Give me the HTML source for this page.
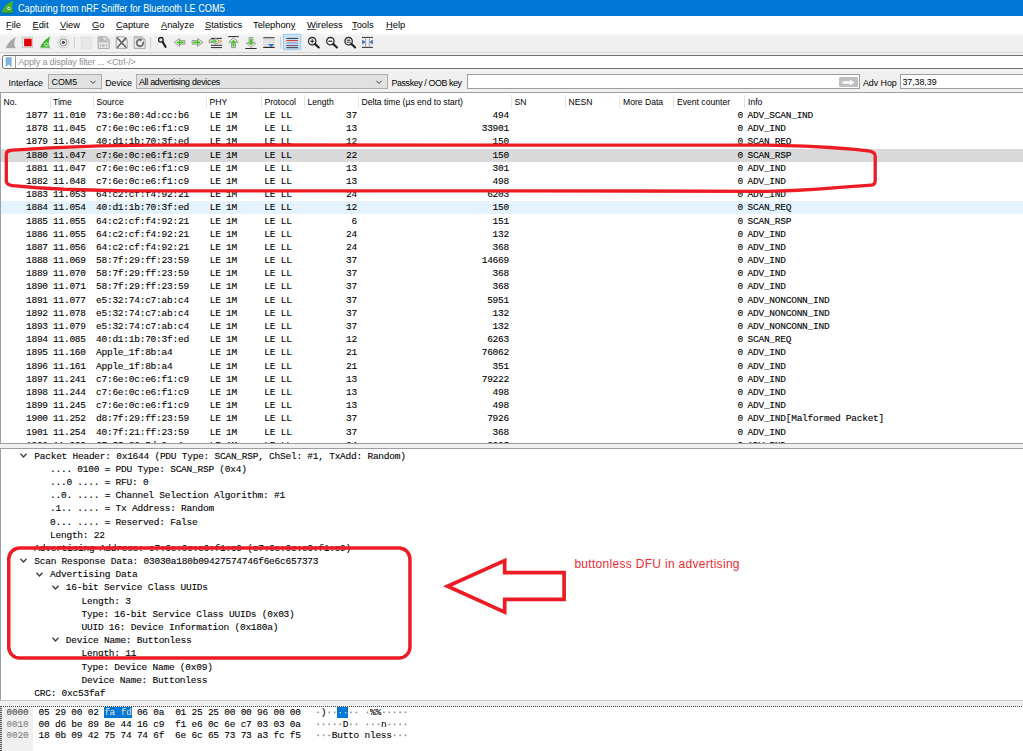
<!DOCTYPE html><html><head><meta charset="utf-8"><title>Capturing from nRF Sniffer for Bluetooth LE COM5</title><style>
*{box-sizing:border-box;margin:0;padding:0}
html,body{width:1023px;height:751px;overflow:hidden}
body{position:relative;background:#f0f0f0;font-family:"Liberation Sans",sans-serif;font-size:8.6px;color:#000}
.a{position:absolute;white-space:pre}
.m{font-family:"Liberation Mono",monospace;font-size:9.5px;letter-spacing:-0.240px;color:#000;-webkit-text-stroke:.1px #000}
#title{left:0;top:0;width:1023px;height:15.7px;background:#0078d7}
#title .t{left:18px;top:2.5px;color:#fff;font-size:10.2px;line-height:12px;transform-origin:0 50%;transform:scaleX(.9)}
#menu{left:0;top:16px;width:1023px;height:17px;background:#fff}
#menu .a{top:2.6px;font-size:9.3px;line-height:12px}
#menu u{text-decoration:underline;text-underline-offset:1px;text-decoration-thickness:.8px;text-decoration-color:#555}
#tb{left:0;top:33px;width:1023px;height:19px;background:linear-gradient(#fafafa,#f0f0f0 4px,#f0f0f0)}
#tbl{left:0;top:51.5px;width:1023px;height:1px;background:#d4d4d4}
#filt{left:1.6px;top:55px;width:1030px;height:14px;background:#fff;border:1px solid #727272;border-radius:2.5px}
#ifbar{left:0;top:70px;width:1023px;height:23px;background:#f0f0f0;border-top:1px solid #fbfbfb}
.combo{background:#e1e1e1;border:1px solid #adadad;height:14.5px;top:74px}
.inp{background:#fff;border:1px solid #9e9e9e;height:14.5px;top:74px}
.lbl{top:77.5px;line-height:11px;font-size:8.9px}
#plist{left:0;top:92px;width:1030px;height:352px;background:#fff;border:1px solid #9a9fa6;overflow:hidden}
#pdet{left:0;top:448px;width:1030px;height:253px;background:#fff;border:1px solid #9a9fa6;border-bottom-color:#c8c8c8;overflow:hidden}
#phex{left:0;top:706px;width:1030px;height:60px;background:#fff;border:1px dotted #444;border-left:2px solid transparent;background-clip:padding-box;overflow:hidden}
.hd{top:96.7px;line-height:11px;font-size:8.6px}
.r{height:13px;line-height:14px}
.chev{width:7px;height:5px}
</style></head><body>
<div id="title" class="a"><svg class="a" style="left:0;top:0" width="16" height="16" viewBox="0 0 16 16"><path d="M1.8 12.6 C2.6 8 6.2 3 13.4 .8 C12.3 4.6 11.7 9 13 12.6 Z" fill="#43b02a"/><path d="M1.5 13 L13.4 13" stroke="#2a7d1c" stroke-width=".8"/><circle cx="8.9" cy="8.4" r="1.7" fill="#d7f0cf"/><circle cx="9.1" cy="8.5" r=".8" fill="#3a8a2a"/></svg><div class="a t">Capturing from nRF Sniffer for Bluetooth LE COM5</div></div>
<div id="menu" class="a"><div class="a" style="left:6px"><u>F</u>ile</div><div class="a" style="left:32.5px"><u>E</u>dit</div><div class="a" style="left:60px"><u>V</u>iew</div><div class="a" style="left:92px"><u>G</u>o</div><div class="a" style="left:116px"><u>C</u>apture</div><div class="a" style="left:161px"><u>A</u>nalyze</div><div class="a" style="left:205px"><u>S</u>tatistics</div><div class="a" style="left:253px">Telephon<u>y</u></div><div class="a" style="left:307px"><u>W</u>ireless</div><div class="a" style="left:352px"><u>T</u>ools</div><div class="a" style="left:386px"><u>H</u>elp</div></div>
<div id="tb" class="a"></div><div id="tbl" class="a"></div>
<svg class="a" style="left:0;top:33px" width="400" height="19" viewBox="0 33 400 19"><path d="M5.80 48.10 C7.20 44.20 10.80 39.40 16.00 37.00 C14.50 40.30 13.20 44.60 15.80 48.10 Z" fill="#a9a9a9"/><path d="M5 48.5 L17 48.5" stroke="#e2e2e2" stroke-width="1"/><rect x="22.3" y="37.2" width="10.2" height="10.2" fill="#f4f4f4" stroke="#c4c4c4" stroke-width=".9"/><rect x="24.1" y="38.7" width="7.6" height="7.6" fill="#dc0000"/><path d="M40.20 47.70 C41.60 43.80 45.20 39.00 50.40 36.60 C48.90 39.90 47.60 44.20 50.20 47.70 Z" fill="#3fb32f"/><circle cx="46.3" cy="44.6" r="1.7" fill="none" stroke="#e8f8e2" stroke-width=".9"/><path d="M39.5 48.4 L51.5 48.4" stroke="#cfe6ca" stroke-width="1"/><circle cx="63.4" cy="42.4" r="5.5" fill="#f7f7f7" stroke="#bdbdbd" stroke-width=".8"/><circle cx="63.4" cy="42.4" r="3.5" fill="none" stroke="#8a8a8a" stroke-width="1"/><circle cx="63.4" cy="42.4" r="1.7" fill="#555"/><path d="M74.4 37 L74.4 48.5" stroke="#cdcdcd" stroke-width="1"/><rect x="81.3" y="37" width="10" height="11.4" fill="#e7e7e7" stroke="#dedede" stroke-width=".8"/><path d="M90.6 44 L91.6 44 L91.6 48 L90.6 48Z" fill="#dcdcdc"/><path d="M98.2 36.8 L106.2 36.8 L109.2 39.8 L109.2 48.4 L98.2 48.4 Z" fill="#ececec" stroke="#a6a6a6" stroke-width="1"/><path d="M106.2 36.8 L106.2 39.8 L109.2 39.8" fill="none" stroke="#a6a6a6" stroke-width=".8"/><path d="M98.7 37.3 L103.5 37.3 L103.5 39.2 L108.7 41.6 L108.7 42.6 L98.7 42.6 Z" fill="#b9b9b9"/><path d="M100.3 44.2 L100.3 46.8 M102.8 44.2 L102.8 46.8 M104 44.2 L104 46.8 M106.6 44.2 L106.6 46.8" stroke="#9a9a9a" stroke-width=".9"/><path d="M116.2 36.8 L124.2 36.8 L127.2 39.8 L127.2 48.4 L116.2 48.4 Z" fill="#efefef" stroke="#a6a6a6" stroke-width="1"/><path d="M124.2 36.8 L124.2 39.8 L127.2 39.8" fill="none" stroke="#a6a6a6" stroke-width=".8"/><path d="M117 37.6 L126.4 47.8 M126.4 37.6 L117 47.8" stroke="#666" stroke-width="1.6"/><path d="M134.2 36.8 L142.2 36.8 L145.2 39.8 L145.2 48.4 L134.2 48.4 Z" fill="#efefef" stroke="#a6a6a6" stroke-width="1"/><path d="M142.2 36.8 L142.2 39.8 L145.2 39.8" fill="none" stroke="#a6a6a6" stroke-width=".8"/><path d="M134.7 37.3 L139 37.3 L139 38.6 L134.7 38.6Z" fill="#b5b5b5"/><path d="M143 41.6 A3.3 3.3 0 1 1 140 39.6" fill="none" stroke="#707070" stroke-width="1.9"/><path d="M139.6 37.6 L142.6 39.8 L139.6 41.8 Z" fill="#707070"/><path d="M150.6 37 L150.6 48.5" stroke="#cdcdcd" stroke-width="1"/><circle cx="160.9" cy="39.8" r="2.3" fill="#e4e4e4" stroke="#222" stroke-width="1.3"/><path d="M162.9 42.2 L165.5 46.8" stroke="#1a1a1a" stroke-width="2.1" stroke-linecap="round"/><path d="M174.3 42.4 L179.70000000000002 38.5 L179.70000000000002 40.65 L184.9 40.65 L184.9 44.15 L179.70000000000002 44.15 L179.70000000000002 46.3 Z" fill="#eef3ea" stroke="#8c8c8c" stroke-width=".9" stroke-linejoin="round"/><path d="M176.40 42.4 L180.30 40.10 L180.30 41.50 L183.70 41.50 L183.70 43.30 L180.30 43.30 L180.30 44.70 Z" fill="#45c81a"/><path d="M203 42.4 L197.6 38.5 L197.6 40.65 L192.1 40.65 L192.1 44.15 L197.6 44.15 L197.6 46.3 Z" fill="#eef3ea" stroke="#8c8c8c" stroke-width=".9" stroke-linejoin="round"/><path d="M200.90 42.4 L197.00 40.10 L197.00 41.50 L193.30 41.50 L193.30 43.30 L197.00 43.30 L197.00 44.70 Z" fill="#45c81a"/><path d="M211 38.4 L222 38.4 M211 45.3 L222 45.3 M211 47.6 L222 47.6" stroke="#2a2a2a" stroke-width="1"/><path d="M216 43.2 L222 43.2" stroke="#c4c4c4" stroke-width=".8"/><path d="M219.6 41.2 L215.2 38.1 L215.2 39.7 L209.2 39.7 L209.2 42.7 L215.2 42.7 L215.2 44.300000000000004 Z" fill="#eef3ea" stroke="#8c8c8c" stroke-width=".9" stroke-linejoin="round"/><path d="M217.50 41.2 L214.60 39.70 L214.60 40.55 L210.40 40.55 L210.40 41.85 L214.60 41.85 L214.60 42.70 Z" fill="#45c81a"/><rect x="219.6" y="40.1" width="2.4" height="2.2" fill="#f6b24a"/><path d="M228.2 36.6 L238.8 36.6" stroke="#2a2a2a" stroke-width="1"/><path d="M233.5 37.6 L238.1 42.2 L235.4 42.2 L235.4 47.6 L231.6 47.6 L231.6 42.2 L228.9 42.2 Z" fill="#eef3ea" stroke="#8c8c8c" stroke-width=".9" stroke-linejoin="round"/><path d="M233.5 39.60 L236.20 42.70 L234.55 42.70 L234.55 46.40 L232.45 46.40 L232.45 42.70 L230.80 42.70 Z" fill="#45c81a"/><path d="M245.4 48.5 L256.6 48.5" stroke="#2a2a2a" stroke-width="1"/><path d="M251 47.5 L255.6 42.9 L252.9 42.9 L252.9 37.5 L249.1 37.5 L249.1 42.9 L246.4 42.9 Z" fill="#eef3ea" stroke="#8c8c8c" stroke-width=".9" stroke-linejoin="round"/><path d="M251 45.50 L253.70 42.40 L252.05 42.40 L252.05 38.70 L249.95 38.70 L249.95 42.40 L248.30 42.40 Z" fill="#45c81a"/><path d="M263.2 37.7 L274.6 37.7 M263.2 47.4 L274.6 47.4" stroke="#2a2a2a" stroke-width="1.1"/><path d="M263.2 40 L274.6 40 M263.2 42.3 L274.6 42.3 M263.2 44.6 L268 44.6" stroke="#c2c2c2" stroke-width=".8"/><path d="M267.8 44 L274.6 44 L271.2 47 Z" fill="#2f6fc6"/><path d="M280.6 37 L280.6 48.5" stroke="#cdcdcd" stroke-width="1"/><rect x="283.4" y="34.3" width="17.4" height="15.4" fill="#cce4f7" stroke="#8fc4ee" stroke-width=".9"/><path d="M286.3 38.4 L298.2 38.4" stroke="#333" stroke-width="1"/><path d="M286.3 40.6 L298.2 40.6" stroke="#e03030" stroke-width="1"/><path d="M286.3 42.9 L298.2 42.9" stroke="#93acd4" stroke-width="1.6"/><path d="M286.3 45.6 L298.2 45.6" stroke="#6a3f7a" stroke-width="1"/><path d="M286.3 47.7 L298.2 47.7" stroke="#333" stroke-width="1"/><circle cx="312.2" cy="41.2" r="3.7" fill="#fff" stroke="#2b2b2b" stroke-width="1.3"/><path d="M314.864 43.864000000000004 L318.79999999999995 47.50000000000001" stroke="#222" stroke-width="2.1" stroke-linecap="round"/><path d="M310.2 41.2 L314.2 41.2 M312.2 39.2 L312.2 43.2" stroke="#222" stroke-width="1.1"/><circle cx="330.4" cy="41.2" r="3.7" fill="#fff" stroke="#2b2b2b" stroke-width="1.3"/><path d="M333.06399999999996 43.864000000000004 L336.99999999999994 47.50000000000001" stroke="#222" stroke-width="2.1" stroke-linecap="round"/><path d="M328.4 41.2 L332.4 41.2" stroke="#222" stroke-width="1.2"/><circle cx="348.6" cy="41.2" r="3.7" fill="#fff" stroke="#2b2b2b" stroke-width="1.3"/><path d="M351.264 43.864000000000004 L355.2 47.50000000000001" stroke="#222" stroke-width="2.1" stroke-linecap="round"/><path d="M346.6 40.2 L350.6 40.2 M346.6 42.2 L350.6 42.2" stroke="#222" stroke-width="1"/><path d="M362 37.4 L372.9 37.4 M362 47.4 L372.9 47.4" stroke="#2a2a2a" stroke-width="1"/><path d="M365.6 37.4 L365.6 47.4 M369.4 37.4 L369.4 47.4" stroke="#9a9a9a" stroke-width=".9"/><path d="M362.2 39.6 L365.4 42 L362.2 44.4 Z M372.8 39.6 L369.6 42 L372.8 44.4 Z" fill="#2f6fc6"/></svg>
<div id="filt" class="a"><svg class="a" style="left:2.6px;top:1px" width="8" height="11" viewBox="0 0 8 11"><path d="M.6 .3 L6.6 .3 L6.6 10.3 L3.6 7.6 L.6 10.3 Z" fill="#7fb0e0"/></svg><div class="a" style="left:12.4px;top:0;width:1px;height:12px;background:#9a9a9a"></div><div class="a" style="left:15.6px;top:1.4px;line-height:11px;color:#909090;font-size:9.1px;letter-spacing:-.18px">Apply a display filter ... &lt;Ctrl-/&gt;</div></div>
<div id="ifbar" class="a"></div>
<div class="a lbl" style="left:8.5px">Interface</div>
<div class="a combo" style="left:48px;width:54px"><div class="a" style="left:2.5px;top:2.3px;line-height:11px;font-size:8.9px">COM5</div><svg class="a" style="left:40px;top:4.8px" width="8" height="5" viewBox="0 0 8 5"><path d="M1.4 .8 L4 3.5 L6.6 .8" fill="none" stroke="#444" stroke-width="1"/></svg></div>
<div class="a lbl" style="left:105.3px;letter-spacing:-.1px">Device</div>
<div class="a combo" style="left:136px;width:252px"><div class="a" style="left:2px;top:2.3px;line-height:11px;font-size:8.9px;letter-spacing:-.3px">All advertising devices</div><svg class="a" style="left:238px;top:4.8px" width="8" height="5" viewBox="0 0 8 5"><path d="M1.4 .8 L4 3.5 L6.6 .8" fill="none" stroke="#444" stroke-width="1"/></svg></div>
<div class="a lbl" style="left:391.5px;letter-spacing:-.4px">Passkey / OOB key</div>
<div class="a inp" style="left:467px;width:393px"><div class="a" style="right:1px;top:1.5px;width:19.5px;height:10.5px;background:#bfbfbf;border-radius:1.5px"><svg class="a" style="left:3.5px;top:2px" width="13" height="7" viewBox="0 0 13 7"><path d="M.5 2.2 L8 2.2 L8 .4 L12.4 3.5 L8 6.6 L8 4.8 L.5 4.8 Z" fill="#fff"/></svg></div></div>
<div class="a lbl" style="left:863px;letter-spacing:-.05px">Adv Hop</div>
<div class="a inp" style="left:900px;width:140px"><div class="a" style="left:1.4px;top:2.3px;line-height:11px;font-size:8.9px;letter-spacing:-.05px">37,38,39</div></div>
<div id="plist" class="a"></div><div class="a hd" style="left:3.5px">No.</div><div class="a hd" style="left:53px">Time</div><div class="a hd" style="left:96.5px">Source</div><div class="a hd" style="left:209.5px">PHY</div><div class="a hd" style="left:264.5px">Protocol</div><div class="a hd" style="left:307.5px">Length</div><div class="a hd" style="left:361.5px">Delta time (µs end to start)</div><div class="a hd" style="left:514.5px">SN</div><div class="a hd" style="left:568.5px">NESN</div><div class="a hd" style="left:623px">More Data</div><div class="a hd" style="left:677px">Event counter</div><div class="a hd" style="left:748px">Info</div><div class="a" style="left:50px;top:95px;width:1px;height:13px;background:#e5e5e5"></div><div class="a" style="left:93px;top:95px;width:1px;height:13px;background:#e5e5e5"></div><div class="a" style="left:206px;top:95px;width:1px;height:13px;background:#e5e5e5"></div><div class="a" style="left:261px;top:95px;width:1px;height:13px;background:#e5e5e5"></div><div class="a" style="left:304px;top:95px;width:1px;height:13px;background:#e5e5e5"></div><div class="a" style="left:358px;top:95px;width:1px;height:13px;background:#e5e5e5"></div><div class="a" style="left:511px;top:95px;width:1px;height:13px;background:#e5e5e5"></div><div class="a" style="left:565px;top:95px;width:1px;height:13px;background:#e5e5e5"></div><div class="a" style="left:619px;top:95px;width:1px;height:13px;background:#e5e5e5"></div><div class="a" style="left:673px;top:95px;width:1px;height:13px;background:#e5e5e5"></div><div class="a" style="left:744px;top:95px;width:1px;height:13px;background:#e5e5e5"></div>
<div class="a" style="left:1px;top:93px;width:1022px;height:350px;overflow:hidden"><div class="a r m" style="left:0;top:16.00px;width:1022px;"><span class="a" style="right:975.20px">1877</span><span class="a" style="left:52.00px">11.010</span><span class="a" style="left:95.00px">73:6e:80:4d:cc:b6</span><span class="a" style="left:208.70px">LE 1M</span><span class="a" style="left:263.30px">LE LL</span><span class="a" style="right:666.00px">37</span><span class="a" style="right:514.00px">494</span><span class="a" style="right:280.00px">0</span><span class="a" style="left:746.50px">ADV_SCAN_IND</span></div><div class="a r m" style="left:0;top:29.19px;width:1022px;"><span class="a" style="right:975.20px">1878</span><span class="a" style="left:52.00px">11.045</span><span class="a" style="left:95.00px">c7:6e:0c:e6:f1:c9</span><span class="a" style="left:208.70px">LE 1M</span><span class="a" style="left:263.30px">LE LL</span><span class="a" style="right:666.00px">13</span><span class="a" style="right:514.00px">33901</span><span class="a" style="right:280.00px">0</span><span class="a" style="left:746.50px">ADV_IND</span></div><div class="a r m" style="left:0;top:42.38px;width:1022px;"><span class="a" style="right:975.20px">1879</span><span class="a" style="left:52.00px">11.046</span><span class="a" style="left:95.00px">40:d1:1b:70:3f:ed</span><span class="a" style="left:208.70px">LE 1M</span><span class="a" style="left:263.30px">LE LL</span><span class="a" style="right:666.00px">12</span><span class="a" style="right:514.00px">150</span><span class="a" style="right:280.00px">0</span><span class="a" style="left:746.50px">SCAN_REQ</span></div><div class="a r m" style="left:0;top:55.57px;width:1022px;background:#d9d9d9;"><span class="a" style="right:975.20px">1880</span><span class="a" style="left:52.00px">11.047</span><span class="a" style="left:95.00px">c7:6e:0c:e6:f1:c9</span><span class="a" style="left:208.70px">LE 1M</span><span class="a" style="left:263.30px">LE LL</span><span class="a" style="right:666.00px">22</span><span class="a" style="right:514.00px">150</span><span class="a" style="right:280.00px">0</span><span class="a" style="left:746.50px">SCAN_RSP</span></div><div class="a r m" style="left:0;top:68.76px;width:1022px;"><span class="a" style="right:975.20px">1881</span><span class="a" style="left:52.00px">11.047</span><span class="a" style="left:95.00px">c7:6e:0c:e6:f1:c9</span><span class="a" style="left:208.70px">LE 1M</span><span class="a" style="left:263.30px">LE LL</span><span class="a" style="right:666.00px">13</span><span class="a" style="right:514.00px">301</span><span class="a" style="right:280.00px">0</span><span class="a" style="left:746.50px">ADV_IND</span></div><div class="a r m" style="left:0;top:81.95px;width:1022px;"><span class="a" style="right:975.20px">1882</span><span class="a" style="left:52.00px">11.048</span><span class="a" style="left:95.00px">c7:6e:0c:e6:f1:c9</span><span class="a" style="left:208.70px">LE 1M</span><span class="a" style="left:263.30px">LE LL</span><span class="a" style="right:666.00px">13</span><span class="a" style="right:514.00px">498</span><span class="a" style="right:280.00px">0</span><span class="a" style="left:746.50px">ADV_IND</span></div><div class="a r m" style="left:0;top:95.14px;width:1022px;"><span class="a" style="right:975.20px">1883</span><span class="a" style="left:52.00px">11.053</span><span class="a" style="left:95.00px">64:c2:cf:f4:92:21</span><span class="a" style="left:208.70px">LE 1M</span><span class="a" style="left:263.30px">LE LL</span><span class="a" style="right:666.00px">24</span><span class="a" style="right:514.00px">6203</span><span class="a" style="right:280.00px">0</span><span class="a" style="left:746.50px">ADV_IND</span></div><div class="a r m" style="left:0;top:108.33px;width:1022px;background:#e5f3ff;"><span class="a" style="right:975.20px">1884</span><span class="a" style="left:52.00px">11.054</span><span class="a" style="left:95.00px">40:d1:1b:70:3f:ed</span><span class="a" style="left:208.70px">LE 1M</span><span class="a" style="left:263.30px">LE LL</span><span class="a" style="right:666.00px">12</span><span class="a" style="right:514.00px">150</span><span class="a" style="right:280.00px">0</span><span class="a" style="left:746.50px">SCAN_REQ</span></div><div class="a r m" style="left:0;top:121.52px;width:1022px;"><span class="a" style="right:975.20px">1885</span><span class="a" style="left:52.00px">11.055</span><span class="a" style="left:95.00px">64:c2:cf:f4:92:21</span><span class="a" style="left:208.70px">LE 1M</span><span class="a" style="left:263.30px">LE LL</span><span class="a" style="right:666.00px">6</span><span class="a" style="right:514.00px">151</span><span class="a" style="right:280.00px">0</span><span class="a" style="left:746.50px">SCAN_RSP</span></div><div class="a r m" style="left:0;top:134.71px;width:1022px;"><span class="a" style="right:975.20px">1886</span><span class="a" style="left:52.00px">11.055</span><span class="a" style="left:95.00px">64:c2:cf:f4:92:21</span><span class="a" style="left:208.70px">LE 1M</span><span class="a" style="left:263.30px">LE LL</span><span class="a" style="right:666.00px">24</span><span class="a" style="right:514.00px">132</span><span class="a" style="right:280.00px">0</span><span class="a" style="left:746.50px">ADV_IND</span></div><div class="a r m" style="left:0;top:147.90px;width:1022px;"><span class="a" style="right:975.20px">1887</span><span class="a" style="left:52.00px">11.056</span><span class="a" style="left:95.00px">64:c2:cf:f4:92:21</span><span class="a" style="left:208.70px">LE 1M</span><span class="a" style="left:263.30px">LE LL</span><span class="a" style="right:666.00px">24</span><span class="a" style="right:514.00px">368</span><span class="a" style="right:280.00px">0</span><span class="a" style="left:746.50px">ADV_IND</span></div><div class="a r m" style="left:0;top:161.09px;width:1022px;"><span class="a" style="right:975.20px">1888</span><span class="a" style="left:52.00px">11.069</span><span class="a" style="left:95.00px">58:7f:29:ff:23:59</span><span class="a" style="left:208.70px">LE 1M</span><span class="a" style="left:263.30px">LE LL</span><span class="a" style="right:666.00px">37</span><span class="a" style="right:514.00px">14669</span><span class="a" style="right:280.00px">0</span><span class="a" style="left:746.50px">ADV_IND</span></div><div class="a r m" style="left:0;top:174.28px;width:1022px;"><span class="a" style="right:975.20px">1889</span><span class="a" style="left:52.00px">11.070</span><span class="a" style="left:95.00px">58:7f:29:ff:23:59</span><span class="a" style="left:208.70px">LE 1M</span><span class="a" style="left:263.30px">LE LL</span><span class="a" style="right:666.00px">37</span><span class="a" style="right:514.00px">368</span><span class="a" style="right:280.00px">0</span><span class="a" style="left:746.50px">ADV_IND</span></div><div class="a r m" style="left:0;top:187.47px;width:1022px;"><span class="a" style="right:975.20px">1890</span><span class="a" style="left:52.00px">11.071</span><span class="a" style="left:95.00px">58:7f:29:ff:23:59</span><span class="a" style="left:208.70px">LE 1M</span><span class="a" style="left:263.30px">LE LL</span><span class="a" style="right:666.00px">37</span><span class="a" style="right:514.00px">368</span><span class="a" style="right:280.00px">0</span><span class="a" style="left:746.50px">ADV_IND</span></div><div class="a r m" style="left:0;top:200.66px;width:1022px;"><span class="a" style="right:975.20px">1891</span><span class="a" style="left:52.00px">11.077</span><span class="a" style="left:95.00px">e5:32:74:c7:ab:c4</span><span class="a" style="left:208.70px">LE 1M</span><span class="a" style="left:263.30px">LE LL</span><span class="a" style="right:666.00px">37</span><span class="a" style="right:514.00px">5951</span><span class="a" style="right:280.00px">0</span><span class="a" style="left:746.50px">ADV_NONCONN_IND</span></div><div class="a r m" style="left:0;top:213.85px;width:1022px;"><span class="a" style="right:975.20px">1892</span><span class="a" style="left:52.00px">11.078</span><span class="a" style="left:95.00px">e5:32:74:c7:ab:c4</span><span class="a" style="left:208.70px">LE 1M</span><span class="a" style="left:263.30px">LE LL</span><span class="a" style="right:666.00px">37</span><span class="a" style="right:514.00px">132</span><span class="a" style="right:280.00px">0</span><span class="a" style="left:746.50px">ADV_NONCONN_IND</span></div><div class="a r m" style="left:0;top:227.04px;width:1022px;"><span class="a" style="right:975.20px">1893</span><span class="a" style="left:52.00px">11.079</span><span class="a" style="left:95.00px">e5:32:74:c7:ab:c4</span><span class="a" style="left:208.70px">LE 1M</span><span class="a" style="left:263.30px">LE LL</span><span class="a" style="right:666.00px">37</span><span class="a" style="right:514.00px">132</span><span class="a" style="right:280.00px">0</span><span class="a" style="left:746.50px">ADV_NONCONN_IND</span></div><div class="a r m" style="left:0;top:240.23px;width:1022px;"><span class="a" style="right:975.20px">1894</span><span class="a" style="left:52.00px">11.085</span><span class="a" style="left:95.00px">40:d1:1b:70:3f:ed</span><span class="a" style="left:208.70px">LE 1M</span><span class="a" style="left:263.30px">LE LL</span><span class="a" style="right:666.00px">12</span><span class="a" style="right:514.00px">6263</span><span class="a" style="right:280.00px">0</span><span class="a" style="left:746.50px">SCAN_REQ</span></div><div class="a r m" style="left:0;top:253.42px;width:1022px;"><span class="a" style="right:975.20px">1895</span><span class="a" style="left:52.00px">11.160</span><span class="a" style="left:95.00px">Apple_1f:8b:a4</span><span class="a" style="left:208.70px">LE 1M</span><span class="a" style="left:263.30px">LE LL</span><span class="a" style="right:666.00px">21</span><span class="a" style="right:514.00px">76062</span><span class="a" style="right:280.00px">0</span><span class="a" style="left:746.50px">ADV_IND</span></div><div class="a r m" style="left:0;top:266.61px;width:1022px;"><span class="a" style="right:975.20px">1896</span><span class="a" style="left:52.00px">11.161</span><span class="a" style="left:95.00px">Apple_1f:8b:a4</span><span class="a" style="left:208.70px">LE 1M</span><span class="a" style="left:263.30px">LE LL</span><span class="a" style="right:666.00px">21</span><span class="a" style="right:514.00px">351</span><span class="a" style="right:280.00px">0</span><span class="a" style="left:746.50px">ADV_IND</span></div><div class="a r m" style="left:0;top:279.80px;width:1022px;"><span class="a" style="right:975.20px">1897</span><span class="a" style="left:52.00px">11.241</span><span class="a" style="left:95.00px">c7:6e:0c:e6:f1:c9</span><span class="a" style="left:208.70px">LE 1M</span><span class="a" style="left:263.30px">LE LL</span><span class="a" style="right:666.00px">13</span><span class="a" style="right:514.00px">79222</span><span class="a" style="right:280.00px">0</span><span class="a" style="left:746.50px">ADV_IND</span></div><div class="a r m" style="left:0;top:292.99px;width:1022px;"><span class="a" style="right:975.20px">1898</span><span class="a" style="left:52.00px">11.244</span><span class="a" style="left:95.00px">c7:6e:0c:e6:f1:c9</span><span class="a" style="left:208.70px">LE 1M</span><span class="a" style="left:263.30px">LE LL</span><span class="a" style="right:666.00px">13</span><span class="a" style="right:514.00px">498</span><span class="a" style="right:280.00px">0</span><span class="a" style="left:746.50px">ADV_IND</span></div><div class="a r m" style="left:0;top:306.18px;width:1022px;"><span class="a" style="right:975.20px">1899</span><span class="a" style="left:52.00px">11.245</span><span class="a" style="left:95.00px">c7:6e:0c:e6:f1:c9</span><span class="a" style="left:208.70px">LE 1M</span><span class="a" style="left:263.30px">LE LL</span><span class="a" style="right:666.00px">13</span><span class="a" style="right:514.00px">498</span><span class="a" style="right:280.00px">0</span><span class="a" style="left:746.50px">ADV_IND</span></div><div class="a r m" style="left:0;top:319.37px;width:1022px;"><span class="a" style="right:975.20px">1900</span><span class="a" style="left:52.00px">11.252</span><span class="a" style="left:95.00px">d8:7f:29:ff:23:59</span><span class="a" style="left:208.70px">LE 1M</span><span class="a" style="left:263.30px">LE LL</span><span class="a" style="right:666.00px">37</span><span class="a" style="right:514.00px">7926</span><span class="a" style="right:280.00px">0</span><span class="a" style="left:746.50px">ADV_IND[Malformed Packet]</span></div><div class="a r m" style="left:0;top:332.56px;width:1022px;"><span class="a" style="right:975.20px">1901</span><span class="a" style="left:52.00px">11.254</span><span class="a" style="left:95.00px">40:7f:21:ff:23:59</span><span class="a" style="left:208.70px">LE 1M</span><span class="a" style="left:263.30px">LE LL</span><span class="a" style="right:666.00px">37</span><span class="a" style="right:514.00px">368</span><span class="a" style="right:280.00px">0</span><span class="a" style="left:746.50px">ADV_IND</span></div><div class="a r m" style="left:0;top:345.75px;width:1022px;"><span class="a" style="right:975.20px">1902</span><span class="a" style="left:52.00px">11.260</span><span class="a" style="left:95.00px">67:33:82:5d:9e:1a</span><span class="a" style="left:208.70px">LE 1M</span><span class="a" style="left:263.30px">LE LL</span><span class="a" style="right:666.00px">24</span><span class="a" style="right:514.00px">2223</span><span class="a" style="right:280.00px">0</span><span class="a" style="left:746.50px">ADV_IND</span></div></div>
<div id="pdet" class="a"></div><div class="a" style="left:1px;top:449px;width:1022px;height:251px;overflow:hidden"><div class="a r m" style="left:33.30px;top:0.65px">Packet Header: 0x1644 (PDU Type: SCAN_RSP, ChSel: #1, TxAdd: Random)</div><svg class="a chev" style="left:19.20px;top:3.95px" viewBox="0 0 7 5"><path d="M.5 .7 L3.5 4 L6.5 .7" fill="none" stroke="#3c3c3c" stroke-width="1.3"/></svg><div class="a r m" style="left:49.05px;top:13.83px">.... 0100 = PDU Type: SCAN_RSP (0x4)</div><div class="a r m" style="left:49.05px;top:27.01px">...0 .... = RFU: 0</div><div class="a r m" style="left:49.05px;top:40.19px">..0. .... = Channel Selection Algorithm: #1</div><div class="a r m" style="left:49.05px;top:53.37px">.1.. .... = Tx Address: Random</div><div class="a r m" style="left:49.05px;top:66.55px">0... .... = Reserved: False</div><div class="a r m" style="left:49.05px;top:79.73px">Length: 22</div><div class="a r m" style="left:33.30px;top:92.91px">Advertising Address: c7:6e:0c:e6:f1:c9 (c7:6e:0c:e6:f1:c9)</div><div class="a r m" style="left:33.30px;top:106.09px">Scan Response Data: 03030a180b09427574746f6e6c657373</div><svg class="a chev" style="left:19.20px;top:109.39px" viewBox="0 0 7 5"><path d="M.5 .7 L3.5 4 L6.5 .7" fill="none" stroke="#3c3c3c" stroke-width="1.3"/></svg><div class="a r m" style="left:49.05px;top:119.27px">Advertising Data</div><svg class="a chev" style="left:34.95px;top:122.57px" viewBox="0 0 7 5"><path d="M.5 .7 L3.5 4 L6.5 .7" fill="none" stroke="#3c3c3c" stroke-width="1.3"/></svg><div class="a r m" style="left:64.80px;top:132.45px">16-bit Service Class UUIDs</div><svg class="a chev" style="left:50.70px;top:135.75px" viewBox="0 0 7 5"><path d="M.5 .7 L3.5 4 L6.5 .7" fill="none" stroke="#3c3c3c" stroke-width="1.3"/></svg><div class="a r m" style="left:80.55px;top:145.63px">Length: 3</div><div class="a r m" style="left:80.55px;top:158.81px">Type: 16-bit Service Class UUIDs (0x03)</div><div class="a r m" style="left:80.55px;top:171.99px">UUID 16: Device Information (0x180a)</div><div class="a r m" style="left:64.80px;top:185.17px">Device Name: Buttonless</div><svg class="a chev" style="left:50.70px;top:188.47px" viewBox="0 0 7 5"><path d="M.5 .7 L3.5 4 L6.5 .7" fill="none" stroke="#3c3c3c" stroke-width="1.3"/></svg><div class="a r m" style="left:80.55px;top:198.35px">Length: 11</div><div class="a r m" style="left:80.55px;top:211.53px">Type: Device Name (0x09)</div><div class="a r m" style="left:80.55px;top:224.71px">Device Name: Buttonless</div><div class="a r m" style="left:33.30px;top:237.89px">CRC: 0xc53faf</div></div>
<div id="phex" class="a"></div><div class="a" style="left:0;top:706px;width:2px;height:45px;background:repeating-linear-gradient(#555 0 1px,#ddd 1px 2px)"></div><div class="a" style="left:2px;top:707px;width:1021px;height:44px;overflow:hidden"><div class="a" style="left:0;top:0;width:30.5px;height:45px;background:#f0f0f0"></div><div class="a" style="left:101.52px;top:0;width:28.10px;height:11px;background:#0078d7"></div><div class="a" style="left:334.74px;top:0;width:10.92px;height:11px;background:#0078d7"></div><div class="a m" style="left:4.6px;top:-0.40px;line-height:11px;color:#5a5a5a">0000</div><div class="a m" style="left:36.60px;top:-0.40px;line-height:11px">05 29 00 02 <span style="color:#fff">fa fd</span> 06 0a  01 25 25 00 00 96 00 00</div><div class="a m" style="left:313.30px;top:-0.40px;line-height:11px"><span style="color:#8a8a8a">·</span>)<span style="color:#8a8a8a">·</span><span style="color:#8a8a8a">·</span><span style="color:#fff">·</span><span style="color:#fff">·</span><span style="color:#8a8a8a">·</span><span style="color:#8a8a8a">·</span> <span style="color:#8a8a8a">·</span>%%<span style="color:#8a8a8a">·</span><span style="color:#8a8a8a">·</span><span style="color:#8a8a8a">·</span><span style="color:#8a8a8a">·</span><span style="color:#8a8a8a">·</span></div><div class="a m" style="left:4.6px;top:11.60px;line-height:11px;color:#a0a0a0">0010</div><div class="a m" style="left:36.60px;top:11.60px;line-height:11px">00 d6 be 89 8e 44 16 c9  f1 e6 0c 6e c7 03 03 0a</div><div class="a m" style="left:313.30px;top:11.60px;line-height:11px"><span style="color:#8a8a8a">·</span><span style="color:#8a8a8a">·</span><span style="color:#8a8a8a">·</span><span style="color:#8a8a8a">·</span><span style="color:#8a8a8a">·</span>D<span style="color:#8a8a8a">·</span><span style="color:#8a8a8a">·</span> <span style="color:#8a8a8a">·</span><span style="color:#8a8a8a">·</span><span style="color:#8a8a8a">·</span>n<span style="color:#8a8a8a">·</span><span style="color:#8a8a8a">·</span><span style="color:#8a8a8a">·</span><span style="color:#8a8a8a">·</span></div><div class="a m" style="left:4.6px;top:23.00px;line-height:11px;color:#a0a0a0">0020</div><div class="a m" style="left:36.60px;top:23.00px;line-height:11px">18 0b 09 42 75 74 74 6f  6e 6c 65 73 73 a3 fc f5</div><div class="a m" style="left:313.30px;top:23.00px;line-height:11px"><span style="color:#8a8a8a">·</span><span style="color:#8a8a8a">·</span><span style="color:#8a8a8a">·</span>Butto nless<span style="color:#8a8a8a">·</span><span style="color:#8a8a8a">·</span><span style="color:#8a8a8a">·</span></div></div>
<svg class="a" style="left:0;top:0" width="1023" height="751" viewBox="0 0 1023 751">
<path d="M6.3 156 L6.3 154.5 Q6.3 151 10 150.5 L12.5 150.2 L50 147.9 L100 145.9 L150 145.1 L250 145 L640 145.2 L768 145.1 L805 146.2 L830 147.5 L855 149.4 L868 150.8 Q875.2 151.6 875.2 156 L875.2 181 Q875.2 184.8 871.5 185.1 L843 187.2 L818 189.1 L793 190.5 L768 191.4 L640 191 L500 190.9 L250 190.9 L128 190.8 L100 190.25 L64 189.25 L37.5 187.75 L12.5 185.6 Q6.3 185 6.3 181 Z" fill="none" stroke="#ed1c24" stroke-width="3.3" stroke-linejoin="round"/>
<rect x="8.75" y="548.1" width="401.2" height="110" rx="11" ry="11" fill="none" stroke="#ed1c24" stroke-width="3.5"/>
<path d="M447.6 586.2 L504.7 560.5 L504.7 572.6 L564.1 572.6 L564.1 599.4 L504.7 599.4 L504.7 612.2 Z" fill="none" stroke="#ed1c24" stroke-width="3.7" stroke-linejoin="miter" stroke-miterlimit="10"/>
</svg>
<div class="a" style="left:574.4px;top:556.5px;font-size:12px;line-height:14px;letter-spacing:.3px;color:#ee2a33">buttonless DFU in advertising</div>
</body></html>
